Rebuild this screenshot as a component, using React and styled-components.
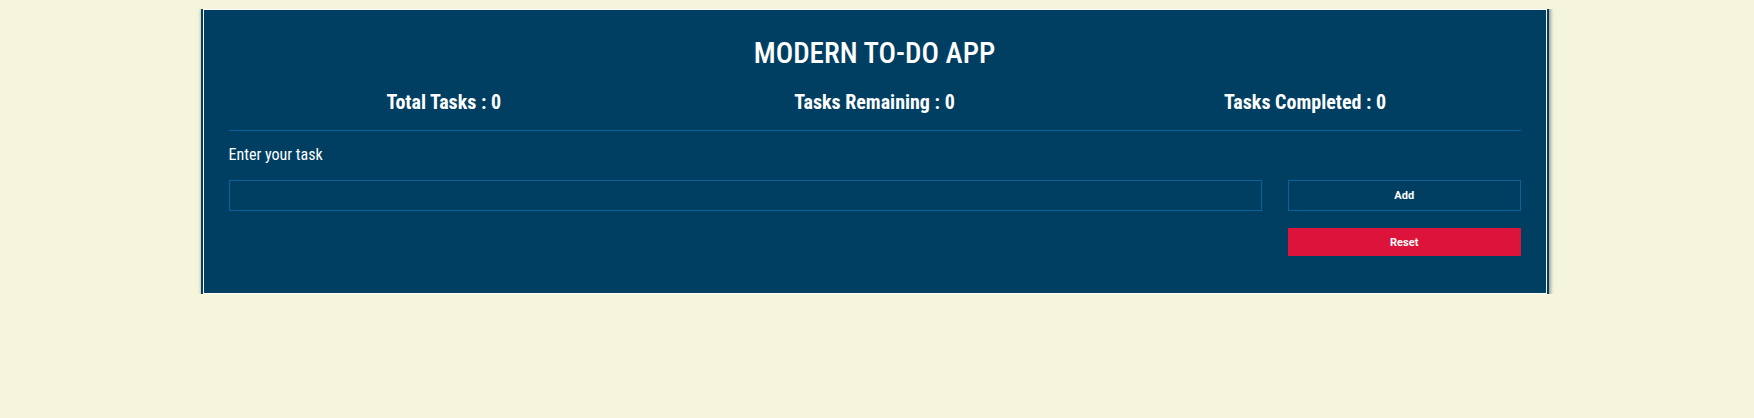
import React, { useState } from 'react';
import styled, { createGlobalStyle } from 'styled-components';

const GlobalStyle = createGlobalStyle`
  * { box-sizing: border-box; }
  body {
    margin: 9px 13px 8px 8px;
    background: #f5f5dc;
    font-family: "Roboto", "Liberation Sans", sans-serif;
    font-stretch: condensed;
    color: #fff;
  }
`;

const Card = styled.div`
  width: 1344px;
  margin: 0 auto;
  padding: 25px 25px 37px;
  background: #003f62;
  border: 1px solid #fff;
  box-shadow: 0 0 0 2px #003f62, 1px 1px 3px 3px rgba(60, 70, 80, 0.45);
`;

const Title = styled.h1`
  margin: 0;
  font-size: 29px;
  line-height: 36px;
  font-weight: 500;
  text-align: center;
`;

const Stats = styled.div`
  display: grid;
  grid-template-columns: repeat(3, 1fr);
  margin-top: 19px;
`;

const Stat = styled.div`
  font-size: 20px;
  line-height: 24px;
  font-weight: 700;
  text-align: center;
`;

const Divider = styled.hr`
  margin: 16px 0 0;
  border: 0;
  border-top: 1px solid #0c619c;
`;

const Label = styled.label`
  display: block;
  margin-top: 14px;
  font-size: 16px;
  line-height: 20px;
`;

const Form = styled.div`
  display: grid;
  grid-template-columns: 80% 18%;
  justify-content: space-between;
  align-items: start;
  margin-top: 15px;
`;

const TaskInput = styled.input`
  height: 31px;
  padding: 0 8px;
  background: transparent;
  border: 1px solid #0c619c;
  color: #fff;
  font-family: inherit;
  font-size: 15px;
  outline: none;
`;

const Buttons = styled.div`
  display: flex;
  flex-direction: column;
  gap: 17px;
`;

const Button = styled.button`
  height: ${p => (p.$danger ? '28px' : '31px')};
  background: ${p => (p.$danger ? '#dc143c' : 'transparent')};
  border: ${p => (p.$danger ? '0' : '1px solid #0c619c')};
  color: #fff;
  font-family: "Roboto", "Liberation Sans", sans-serif;
  font-stretch: normal;
  font-size: 11px;
  font-weight: 700;
  cursor: pointer;
`;

export default function App() {
  const [tasks, setTasks] = useState([]);
  const [text, setText] = useState('');
  const done = tasks.filter(t => t.done).length;

  const add = () => {
    if (!text.trim()) return;
    setTasks([...tasks, { text, done: false }]);
    setText('');
  };

  return (
    <>
      <GlobalStyle />
      <Card>
        <Title>MODERN TO-DO APP</Title>
        <Stats>
          <Stat>Total Tasks : {tasks.length}</Stat>
          <Stat>Tasks Remaining : {tasks.length - done}</Stat>
          <Stat>Tasks Completed : {done}</Stat>
        </Stats>
        <Divider />
        <Label htmlFor="task">Enter your task</Label>
        <Form>
          <TaskInput id="task" value={text} onChange={e => setText(e.target.value)} />
          <Buttons>
            <Button onClick={add}>Add</Button>
            <Button $danger onClick={() => setTasks([])}>Reset</Button>
          </Buttons>
        </Form>
      </Card>
    </>
  );
}
